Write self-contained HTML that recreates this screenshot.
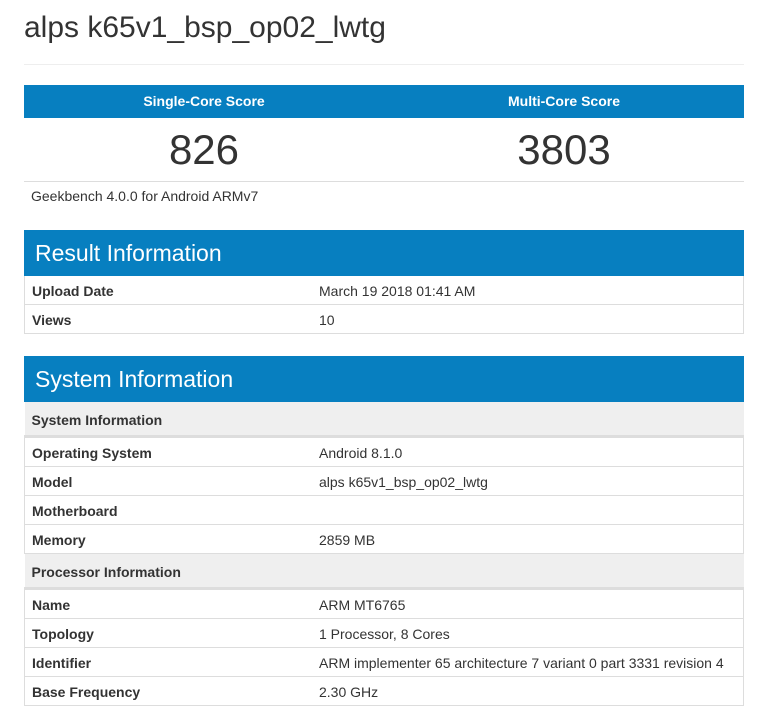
<!DOCTYPE html>
<html><head><style>
body{margin:0;background:#fff;font-family:"Liberation Sans",Arial,sans-serif;color:#333;}
.c{position:absolute;left:24px;width:720px;}
h1{position:absolute;left:24px;top:11px;margin:0;font-size:30px;font-weight:normal;color:#333;}
.hr{top:64px;height:1px;background:#eee;}
.sh{top:85px;height:33px;background:#077fc0;color:#fff;font-weight:bold;font-size:14px;display:flex;}
.sh div,.sv div{flex:1;text-align:center;line-height:33px;}
.sv{top:118px;height:63px;display:flex;border-bottom:1px solid #ddd;}
.sv div{font-size:42px;line-height:63px;}
.gb{position:absolute;left:31px;top:188px;font-size:14px;}
.hd{height:46px;background:#077fc0;color:#fff;font-size:23px;line-height:46px;padding-left:11px;box-sizing:border-box;}
table{border-collapse:collapse;width:720px;font-size:14px;}
td{height:28px;border:1px solid #ddd;border-top:none;padding:0 0 0 7px;vertical-align:middle;}
td span{position:relative;top:1px;}
td:first-child{font-weight:bold;width:280px;border-right:none;}
td:last-child{border-left:none;}
tr.s td{background:#efefef;height:33px;font-weight:bold;border-bottom:3px solid #ddd;}
</style></head><body>
<h1>alps k65v1_bsp_op02_lwtg</h1>
<div class="c hr"></div>
<div class="c sh"><div>Single-Core Score</div><div>Multi-Core Score</div></div>
<div class="c sv"><div>826</div><div>3803</div></div>
<div class="gb">Geekbench 4.0.0 for Android ARMv7</div>
<div class="c" style="top:230px">
<div class="hd">Result Information</div>
<table><tr><td><span>Upload Date</span></td><td><span>March 19 2018 01:41 AM</span></td></tr>
<tr><td><span>Views</span></td><td><span>10</span></td></tr></table>
</div>
<div class="c" style="top:356px">
<div class="hd">System Information</div>
<table>
<tr class="s"><td colspan="2"><span>System Information</span></td></tr>
<tr><td><span>Operating System</span></td><td><span>Android 8.1.0</span></td></tr>
<tr><td><span>Model</span></td><td><span>alps k65v1_bsp_op02_lwtg</span></td></tr>
<tr><td><span>Motherboard</span></td><td></td></tr>
<tr><td><span>Memory</span></td><td><span>2859 MB</span></td></tr>
<tr class="s"><td colspan="2"><span>Processor Information</span></td></tr>
<tr><td><span>Name</span></td><td><span>ARM MT6765</span></td></tr>
<tr><td><span>Topology</span></td><td><span>1 Processor, 8 Cores</span></td></tr>
<tr><td><span>Identifier</span></td><td><span>ARM implementer 65 architecture 7 variant 0 part 3331 revision 4</span></td></tr>
<tr><td><span>Base Frequency</span></td><td><span>2.30 GHz</span></td></tr>
</table>
</div>
</body></html>
